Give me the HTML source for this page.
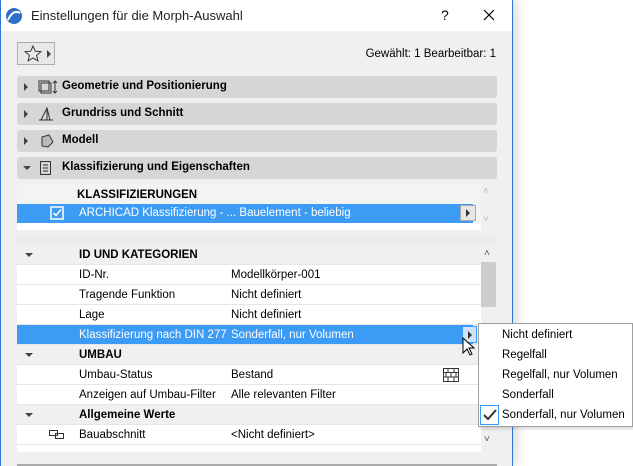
<!DOCTYPE html>
<html><head><meta charset="utf-8"><style>
*{margin:0;padding:0;box-sizing:border-box}
body{width:633px;height:466px;background:#fff;font-family:"Segoe UI","Liberation Sans",sans-serif;font-size:11.5px;color:#000;position:relative;overflow:hidden}
.dlg{position:absolute;left:0;top:0;width:513px;height:466px;background:#f0f0f0;border-left:1px solid #2b79d0;border-right:1px solid #2b79d0;box-shadow:4px 0 10px rgba(0,0,0,.15)}
.title{position:absolute;left:0;top:0;width:511px;height:31px;background:#fff}
.abs{position:absolute;white-space:nowrap}
.bar{position:absolute;left:16px;width:480px;height:22px;background:#d6d6d6;border-radius:3px}
.bar span{position:absolute;left:45px;top:4px;font-weight:bold}
.tri{position:absolute;left:7px;top:7px;width:0;height:0;border-top:4px solid transparent;border-bottom:4px solid transparent;border-left:4px solid #444}
.trid{position:absolute;width:0;height:0;border-left:4px solid transparent;border-right:4px solid transparent;border-top:4px solid #444}
.row{position:absolute;left:16px;width:464px;height:20px;background:#fff;border-bottom:1px solid #e6e6e6}
.row.h{background:#f0f0f0;font-weight:bold}
.row.sel{background:#3c9bf5;color:#fff;width:456px}
.row .a{position:absolute;left:62px;top:4px}
.row .b{position:absolute;left:214px;top:4px}
.mi{position:absolute;left:23px;top:0}
</style></head><body>
<div class="dlg">
<div class="title"></div>
<svg class="abs" style="left:4px;top:7px" width="18" height="18" viewBox="0 0 18 18"><circle cx="9" cy="9" r="8" fill="#2f6fc4"/><path d="M3 13 Q8 2 15 6" stroke="#fff" stroke-width="2" fill="none"/></svg>
<div class="abs" style="left:30px;top:8px;font-size:13px;color:#222">Einstellungen für die Morph-Auswahl</div>
<div class="abs" style="left:440px;top:7px;font-size:14px">?</div>
<svg class="abs" style="left:482px;top:9px" width="12" height="12"><path d="M1 1L11 11M11 1L1 11" stroke="#000" stroke-width="1.2"/></svg>
<div class="abs" style="left:16px;top:42px;width:38px;height:23px;border:1px solid #adadad;background:#e8e8e8"></div>
<svg class="abs" style="left:23px;top:45px" width="18" height="17"><path d="M9 1l2.3 5.2 5.6.5-4.3 3.7 1.3 5.5L9 13 4.1 15.9l1.3-5.5L1.1 6.7l5.6-.5z" fill="none" stroke="#333"/></svg>
<div class="abs" style="left:46px;top:50px;border-top:4px solid transparent;border-bottom:4px solid transparent;border-left:4px solid #444"></div>
<div class="abs" style="right:16px;top:48px">Gewählt: 1 Bearbeitbar: 1</div>
<div class="bar" style="top:76px"><div class="tri"></div><svg class="abs" style="left:20px;top:3px" width="22" height="16"><rect x="2" y="2" width="10" height="10" fill="none" stroke="#333"/><rect x="4" y="4" width="10" height="10" fill="none" stroke="#333"/><path d="M18 2v12M16 4l2-2 2 2M16 12l2 2 2-2" stroke="#333" fill="none"/></svg><span>Geometrie und Positionierung</span></div>
<div class="bar" style="top:103px"><div class="tri"></div><svg class="abs" style="left:21px;top:3px" width="18" height="16"><path d="M3 14L9 2 12 14ZM9 2v12M1 14h14" stroke="#333" fill="none"/></svg><span>Grundriss und Schnitt</span></div>
<div class="bar" style="top:130px"><div class="tri"></div><svg class="abs" style="left:21px;top:3px" width="18" height="16"><path d="M4 4L11 2 15 9 10 14 4 13Z" fill="#bbb" stroke="#333"/></svg><span>Modell</span></div>
<div class="bar" style="top:157px"><div class="trid" style="left:6px;top:9px"></div><svg class="abs" style="left:22px;top:3px" width="14" height="16"><rect x="1.5" y="1.5" width="10" height="13" fill="none" stroke="#333"/><path d="M4 5h5M4 8h5M4 11h5" stroke="#333"/></svg><span>Klassifizierung und Eigenschaften</span></div>
<div class="abs" style="left:16px;top:184px;width:464px;height:46px;background:#f3f3f3"></div>
<div class="abs" style="left:76px;top:189px;font-weight:bold">KLASSIFIZIERUNGEN</div>
<div class="abs" style="left:16px;top:204px;width:456px;height:19px;background:#3c9bf5"></div>
<div class="abs" style="left:16px;top:223px;width:464px;height:7px;background:#fff"></div>
<svg class="abs" style="left:49px;top:206px" width="14" height="14"><rect x="1" y="1" width="12" height="12" fill="none" stroke="#fff" stroke-width="1.5"/><path d="M3.5 7l2.5 2.5 5-6" stroke="#fff" stroke-width="1.6" fill="none"/></svg>
<div class="abs" style="left:78px;top:207px;color:#fff">ARCHICAD Klassifizierung - ... Bauelement - beliebig</div>
<div class="abs" style="left:459px;top:205px;width:16px;height:16px;background:#e6e6e6;border:1px solid #aaa"></div>
<div class="abs" style="left:465px;top:209px;border-top:4px solid transparent;border-bottom:4px solid transparent;border-left:4px solid #333"></div>
<div class="abs" style="left:482px;top:186px;color:#bbb;font-size:10px">˄</div>
<div class="abs" style="left:482px;top:214px;color:#bbb;font-size:10px">˅</div>
<div class="abs" style="left:16px;top:235px;width:480px;height:10px;background:#ececec"></div>

<div class="row h" style="top:245px"><div class="trid" style="left:8px;top:8px"></div><span class="a">ID UND KATEGORIEN</span></div>
<div class="row" style="top:265px"><span class="a">ID-Nr.</span><span class="b">Modellkörper-001</span></div>
<div class="row" style="top:285px"><span class="a">Tragende Funktion</span><span class="b">Nicht definiert</span></div>
<div class="row" style="top:305px"><span class="a">Lage</span><span class="b">Nicht definiert</span></div>
<div class="row sel" style="top:325px"><span class="a">Klassifizierung nach DIN 277</span><span class="b">Sonderfall, nur Volumen</span></div>
<div class="abs" style="left:461px;top:326px;width:15px;height:17px;background:#cfe4fb;border:1px solid #3c9bf5"></div>
<div class="abs" style="left:467px;top:331px;border-top:4px solid transparent;border-bottom:4px solid transparent;border-left:4px solid #333"></div>
<div class="row h" style="top:345px"><div class="trid" style="left:8px;top:8px"></div><span class="a">UMBAU</span></div>
<div class="row" style="top:365px"><span class="a">Umbau-Status</span><span class="b">Bestand</span><svg class="abs" style="left:426px;top:3px" width="16" height="14"><path d="M0.5 0.5h15v13h-15zM0.5 4.5h15M0.5 9h15M5 0.5v4M11 0.5v4M3 4.5v4.5M8 4.5v4.5M13 4.5v4.5M5 9v4.5M11 9v4.5" stroke="#333" fill="none"/></svg></div>
<div class="row" style="top:385px"><span class="a">Anzeigen auf Umbau-Filter</span><span class="b">Alle relevanten Filter</span></div>
<div class="row h" style="top:405px"><div class="trid" style="left:8px;top:8px"></div><span class="a">Allgemeine Werte</span></div>
<div class="row" style="top:425px"><svg class="abs" style="left:32px;top:5px" width="16" height="10"><rect x="0.5" y="0.5" width="8" height="5" fill="none" stroke="#333"/><rect x="6.5" y="3.5" width="8" height="5" fill="none" stroke="#333"/></svg><span class="a">Bauabschnitt</span><span class="b">&lt;Nicht definiert&gt;</span></div>
<div class="row" style="top:445px;height:7px;overflow:hidden;border:none"></div>
<div class="abs" style="left:480px;top:245px;width:16px;height:207px;background:#f0f0f0"></div>
<div class="abs" style="left:483px;top:248px;color:#555;font-size:10px">˄</div>
<div class="abs" style="left:480px;top:262px;width:15px;height:45px;background:#cdcdcd"></div>
<div class="abs" style="left:483px;top:434px;color:#555;font-size:10px">˅</div>
<div class="abs" style="left:16px;top:464px;width:480px;height:2px;background:#aaa"></div>
</div>

<div class="abs" style="left:478px;top:323px;width:155px;height:104px;background:#fff;border:1px solid #a0a0a0;box-shadow:2px 2px 3px rgba(0,0,0,.15)">
<div class="mi" style="top:5px">Nicht definiert</div>
<div class="mi" style="top:25px">Regelfall</div>
<div class="mi" style="top:45px">Regelfall, nur Volumen</div>
<div class="mi" style="top:65px">Sonderfall</div>
<div class="mi" style="top:85px">Sonderfall, nur Volumen</div>
<div class="abs" style="left:1px;top:81px;width:19px;height:20px;border:1px solid #3c9bf5;background:#fff"></div>
<svg class="abs" style="left:4px;top:85px" width="14" height="12"><path d="M1 6l4 4 8-9" stroke="#333" stroke-width="2" fill="none"/></svg>
</div>
<svg class="abs" style="left:462px;top:337px" width="14" height="20"><path d="M1 1v15l4-4 3 6 2-1-3-6h5z" fill="#fff" stroke="#000"/></svg>
</body></html>
